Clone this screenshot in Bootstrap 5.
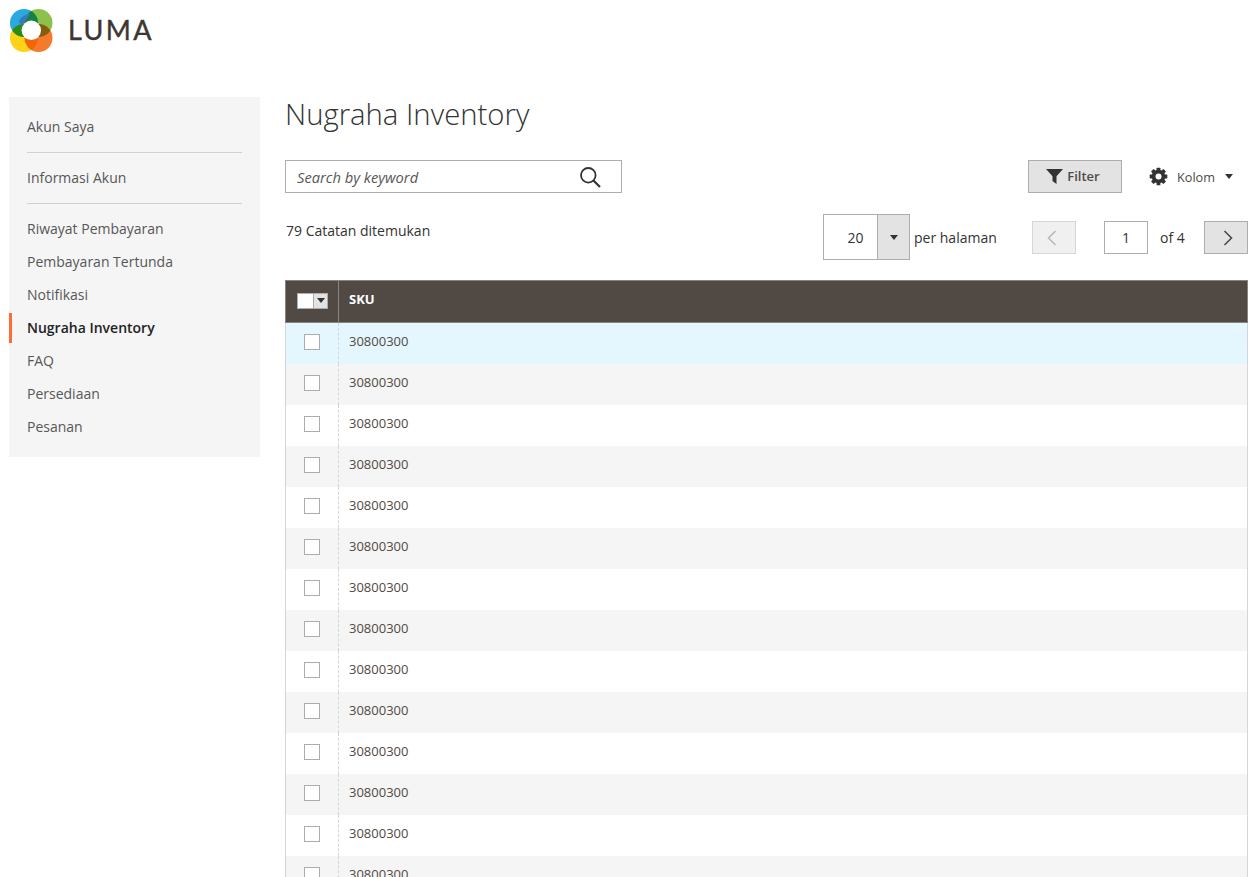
<!DOCTYPE html>
<html lang="id">
<head>
<meta charset="utf-8">
<title>Nugraha Inventory</title>
<link href="https://cdn.jsdelivr.net/npm/bootstrap@5.3.0/dist/css/bootstrap.min.css" rel="stylesheet">
<style>
html,body{height:877px;overflow:hidden}
body{font-family:"Open Sans",sans-serif;font-size:14px;color:#333;background:#fff;line-height:20px}
.brand-bar{height:97px;padding:9px 0 0 10px}
.brand-word{font-family:"Lato",sans-serif;font-size:27px;line-height:41px;letter-spacing:2.4px;color:#3d3633;margin-left:15px;font-weight:400;-webkit-text-stroke:.4px #3d3633}
.page-wrap{padding:0 10px 0 9px;gap:25px}
.side-box{width:251px;height:360px;background:#f5f5f5;padding:15px 0;flex:none}
.side-link{display:block;height:33px;line-height:29px;padding:0 18px;color:#575757;text-decoration:none;border-left:3px solid transparent;padding-left:15px}
.side-link.active-link{color:#222;font-weight:600;border-left-color:#ff6d33;height:30px;margin-bottom:3px}
.side-rule{border:0;border-top:1px solid #d1d1d1;margin:7px 18px 10px;opacity:1;height:0}
.main-col{width:963px;flex:none}
.page-head{font-size:29.3px;font-weight:300;line-height:34px;color:#333;margin:0;height:63px}
.search-box{width:337px;height:33px;border:1px solid #adadad;padding:0 20px 0 11px;font-style:italic;color:#575757;font-size:14.7px}
.tool-btn{width:94px;height:33px;background:#e3e3e3;border:1px solid #adadad;font-size:13px;font-weight:600;color:#514943;gap:4px;border-radius:0;padding:0 4px 0 0}
.col-tool{font-size:12.7px;color:#514943;margin-left:27px;width:99px;gap:9px}
.col-tool .caret-d{margin-left:1px}
.caret-d{width:0;height:0;border-left:4.5px solid transparent;border-right:4.5px solid transparent;border-top:5px solid #333;display:inline-block}
.tool-row{height:33px}
.pager-row{height:87px;padding-top:21px}
.found{margin-left:1px;line-height:20px;padding-top:7px;font-size:14px;color:#333}
.size-box{width:87px;height:46px;border:1px solid #adadad}
.size-num{width:54px;text-align:right;padding-right:14px;color:#333;line-height:46px}
.size-arrow{width:32px;background:#e3e3e3;border-left:1px solid #adadad}
.per-text{margin-left:4px;width:118px;line-height:47px;color:#333}
.page-btn{width:44px;height:33px;border:1px solid #adadad;background:#e3e3e3;margin-top:7px;border-radius:0;padding:0}
.page-btn.off{background:#f0f0f0;border-color:#d6d6d6}
.page-num{width:44px;height:33px;border:1px solid #adadad;margin:7px 12px 0 28px;text-align:center;line-height:31px;color:#333}
.page-of{margin-top:7px;line-height:33px;width:44px;color:#333}
.grid-table{width:963px;border-collapse:separate;border-spacing:0;table-layout:fixed;margin:0}
.grid-table th{height:43px;background:#514943;color:#fff;font-size:13px;font-weight:700;padding:0 10px 6px;vertical-align:middle;border-top:1px solid #8a837f;border-bottom:1px solid #8a837f}
.grid-table th:first-child{width:54px;padding:0 0 2px;border-left:1px solid #8a837f;border-right:1px solid #8a837f}
.grid-table th:last-child{border-right:1px solid #8a837f}
.grid-table td{height:41px;padding:0 10px 5px;font-size:13px;color:#514943;vertical-align:middle;border-right:1px solid #d6d6d6;background:#fff}
.grid-table td:first-child{padding:0;border-left:1px solid #d6d6d6;border-right:1px dashed #d6d6d6}
.grid-table tr.zebra td{background:#f5f5f5}
.grid-table tr.hot td{background:#e5f7fe}
.tick{width:16px;height:16px;border:1px solid #adadad;background:#fff;display:block;margin:0 auto 3px}
.all-tick{width:31px;height:16px;display:flex;margin:0 0 0 11px;background:#fff;border:1px solid #adadad}
.all-tick i{display:block;width:15px;background:#fff}
.all-tick b{flex:1;background:#e3e3e3;display:flex;align-items:center;justify-content:center;border-left:1px solid #adadad}
</style>
</head>
<body>
<header class="brand-bar d-flex align-items-start">
<svg width="43" height="43" viewBox="0 0 43 43" aria-hidden="true">
<g style="isolation:isolate">
<circle cx="14" cy="14" r="14" fill="#29a9df"/>
<circle cx="28.5" cy="14" r="14" fill="#8cc14c" style="mix-blend-mode:multiply"/>
<circle cx="14" cy="29" r="14" fill="#fdd31a" style="mix-blend-mode:multiply"/>
<circle cx="28.5" cy="29" r="14" fill="#f47b2c" style="mix-blend-mode:multiply"/>
</g>
<path d="M9 12 C12 7 16 5 20 5 L14 14 11 17z" fill="#3a78b8"/>
<circle cx="21.3" cy="21.3" r="9.7" fill="#fff"/>
</svg>
<span class="brand-word">LUMA</span>
</header>
<div class="page-wrap d-flex align-items-start">
<nav class="side-box">
<a class="side-link" href="#">Akun Saya</a>
<hr class="side-rule">
<a class="side-link" href="#">Informasi Akun</a>
<hr class="side-rule">
<a class="side-link" href="#">Riwayat Pembayaran</a>
<a class="side-link" href="#">Pembayaran Tertunda</a>
<a class="side-link" href="#">Notifikasi</a>
<a class="side-link active-link" href="#">Nugraha Inventory</a>
<a class="side-link" href="#">FAQ</a>
<a class="side-link" href="#">Persediaan</a>
<a class="side-link" href="#">Pesanan</a>
</nav>
<main class="main-col">
<h1 class="page-head">Nugraha Inventory</h1>
<div class="tool-row d-flex align-items-center justify-content-between">
<div class="search-box d-flex align-items-center justify-content-between">
<span>Search by keyword</span>
<svg width="22" height="22" viewBox="0 0 22 22" fill="none" stroke="#333" aria-hidden="true"><circle cx="9.3" cy="9.3" r="7.3" stroke-width="1.8"/><path d="M14.5 14.5 21 21" stroke-width="2.2"/></svg>
</div>
<div class="d-flex align-items-center">
<button type="button" class="btn tool-btn d-flex align-items-center justify-content-center">
<svg width="17" height="15" viewBox="0 0 17 15" aria-hidden="true"><path d="M0 0h17L10.5 7.2V15L6.5 12V7.2z" fill="#333"/></svg>Filter</button>
<div class="col-tool d-flex align-items-center">
<svg width="19" height="19" viewBox="0 0 19 19" aria-hidden="true"><g fill="#333"><circle cx="9.5" cy="9.5" r="6.8"/><rect x="7.6" y="0.7" width="3.8" height="17.6" rx=".6"/><rect x="7.6" y="0.7" width="3.8" height="17.6" rx=".6" transform="rotate(45 9.5 9.5)"/><rect x="7.6" y="0.7" width="3.8" height="17.6" rx=".6" transform="rotate(90 9.5 9.5)"/><rect x="7.6" y="0.7" width="3.8" height="17.6" rx=".6" transform="rotate(135 9.5 9.5)"/></g><circle cx="9.5" cy="9.5" r="3" fill="#fff"/></svg>
<span>Kolom</span><span class="caret-d"></span>
</div>
</div>
</div>
<div class="pager-row d-flex justify-content-between">
<div class="found">79 Catatan ditemukan</div>
<div class="d-flex">
<div class="size-box d-flex">
<div class="size-num">20</div>
<div class="size-arrow d-flex align-items-center justify-content-center"><span class="caret-d"></span></div>
</div>
<div class="per-text">per halaman</div>
<button type="button" class="btn page-btn off d-flex align-items-center justify-content-center" aria-label="Previous"><svg class="me-1" width="10" height="16" viewBox="0 0 10 16" fill="none" stroke="#b8b8b8" stroke-width="1.6" aria-hidden="true"><path d="M8.5 1 1.5 8l7 7"/></svg></button>
<div class="page-num">1</div>
<div class="page-of">of 4</div>
<button type="button" class="btn page-btn d-flex align-items-center justify-content-center" aria-label="Next"><svg class="ms-1" width="10" height="16" viewBox="0 0 10 16" fill="none" stroke="#514943" stroke-width="1.6" aria-hidden="true"><path d="M1.5 1 8.5 8l-7 7"/></svg></button>
</div>
</div>
<table class="grid-table">
<thead><tr><th><span class="all-tick"><i></i><b><span class="caret-d"></span></b></span></th><th>SKU</th></tr></thead>
<tbody>
<tr class="hot"><td><span class="tick"></span></td><td>30800300</td></tr>
<tr class="zebra"><td><span class="tick"></span></td><td>30800300</td></tr>
<tr><td><span class="tick"></span></td><td>30800300</td></tr>
<tr class="zebra"><td><span class="tick"></span></td><td>30800300</td></tr>
<tr><td><span class="tick"></span></td><td>30800300</td></tr>
<tr class="zebra"><td><span class="tick"></span></td><td>30800300</td></tr>
<tr><td><span class="tick"></span></td><td>30800300</td></tr>
<tr class="zebra"><td><span class="tick"></span></td><td>30800300</td></tr>
<tr><td><span class="tick"></span></td><td>30800300</td></tr>
<tr class="zebra"><td><span class="tick"></span></td><td>30800300</td></tr>
<tr><td><span class="tick"></span></td><td>30800300</td></tr>
<tr class="zebra"><td><span class="tick"></span></td><td>30800300</td></tr>
<tr><td><span class="tick"></span></td><td>30800300</td></tr>
<tr class="zebra"><td><span class="tick"></span></td><td>30800300</td></tr>
</tbody>
</table>
</main>
</div>
<script src="https://cdn.jsdelivr.net/npm/bootstrap@5.3.0/dist/js/bootstrap.bundle.min.js"></script>
</body>
</html>
